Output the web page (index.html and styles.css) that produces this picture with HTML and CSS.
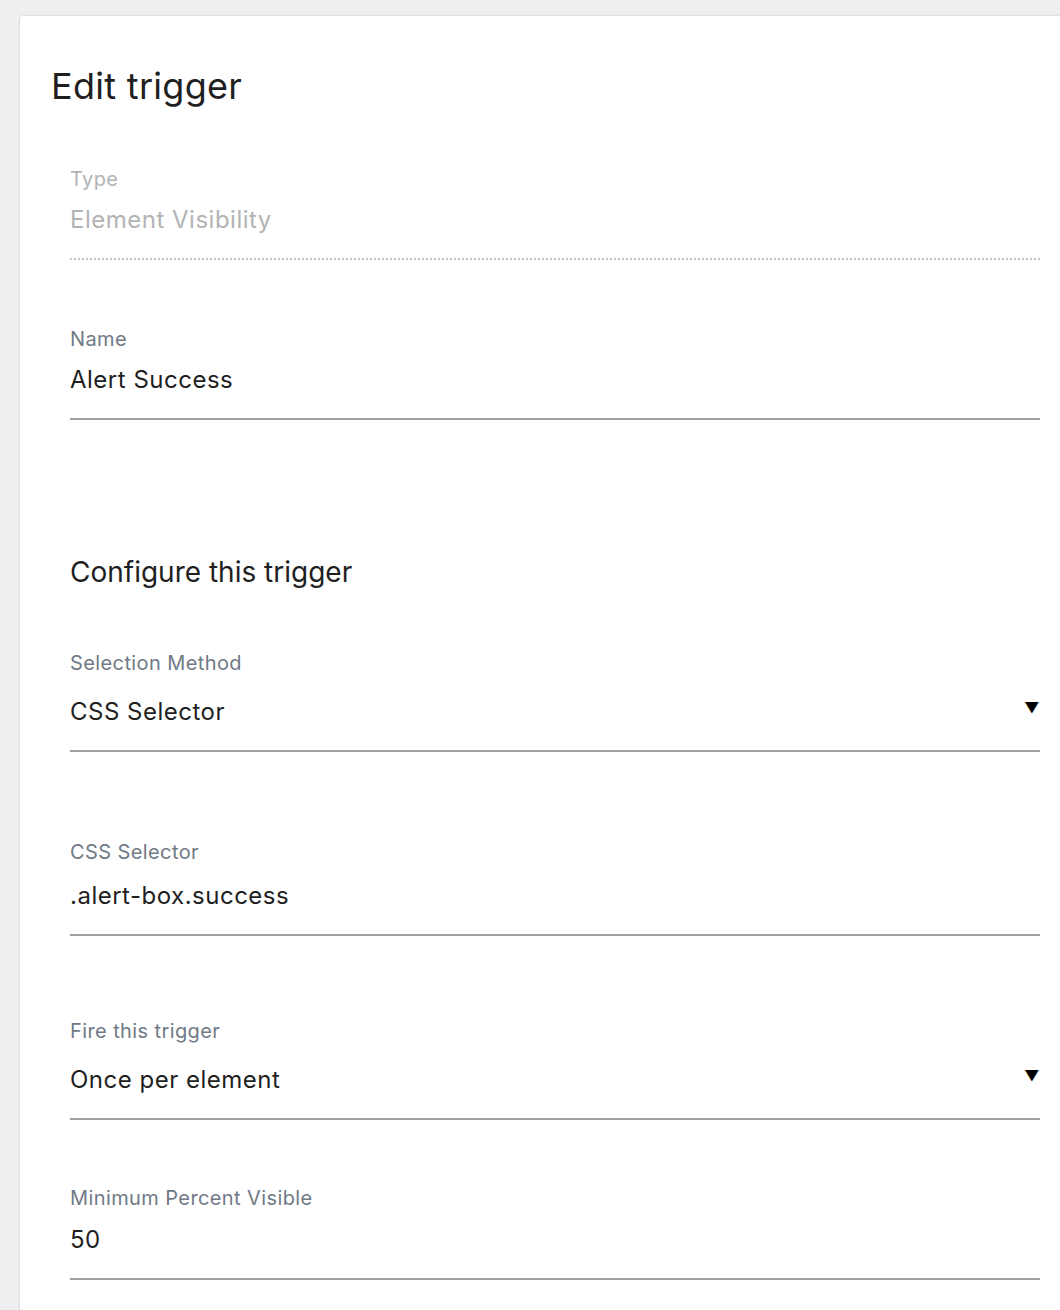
FILE: index.html
```html
<!DOCTYPE html>
<html lang="en">
<head>
<meta charset="utf-8">
<title>Edit trigger</title>
<link rel="stylesheet" href="styles.css">
</head>
<body>
<div class="page">
  <section class="card">
    <h1 class="title">Edit trigger</h1>
    <div class="fields">
      <div class="field field-disabled">
        <div class="label">Type</div>
        <div class="value">Element Visibility</div>
      </div>
      <div class="field field-name">
        <div class="label">Name</div>
        <div class="value">Alert Success</div>
      </div>
      <h2 class="section-title">Configure this trigger</h2>
      <div class="field field-select field-method">
        <div class="label">Selection Method</div>
        <div class="value"><span>CSS Selector</span><span class="arrow">&#9660;</span></div>
      </div>
      <div class="field field-css">
        <div class="label">CSS Selector</div>
        <div class="value">.alert-box.success</div>
      </div>
      <div class="field field-select field-fire">
        <div class="label">Fire this trigger</div>
        <div class="value"><span>Once per element</span><span class="arrow">&#9660;</span></div>
      </div>
      <div class="field field-min">
        <div class="label">Minimum Percent Visible</div>
        <div class="value">50</div>
      </div>
    </div>
  </section>
</div>
</body>
</html>
```
FILE: styles.css
```css
html, body {
  margin: 0;
  padding: 0;
}
body {
  background: #eeeff1;
  font-family: Inter, "Noto Sans", sans-serif;
  color: #1f1f1f;
  height: 1310px;
  overflow: hidden;
}
.page {
  padding: 16px 0 0 20px;
}
.card {
  background: #ffffff;
  border-top-left-radius: 3px;
  box-shadow: 0 0 2px rgba(0, 0, 0, 0.18), 0 1px 3px rgba(0, 0, 0, 0.06);
  min-height: 1400px;
  padding: 48px 20px 0 31px;
}
.title {
  margin: 0;
  font-size: 36px;
  font-weight: 400;
  line-height: 44px;
  color: #1f1f1f;
  letter-spacing: 0.3px;
}
.fields {
  padding-left: 19px;
}
.field {
  display: flex;
  flex-direction: column;
  border-bottom: 2px solid #a0a0a0;
}
.label {
  font-size: 20px;
  line-height: 22px;
  letter-spacing: 0.4px;
  color: #6f7a86;
}
.value {
  font-size: 24px;
  line-height: 30px;
  letter-spacing: 0.5px;
  color: #1f1f1f;
  display: flex;
  justify-content: space-between;
  align-items: center;
}
.field-disabled {
  margin-top: 60px;
  border-bottom: 2px dotted #c4c4c4;
}
.field-disabled .label,
.field-disabled .value {
  color: #b3b3b3;
}
.field-disabled .value { margin-top: 15px; padding-bottom: 23px; }
.field-name { margin-top: 68px; }
.field-name .value { margin-top: 15px; padding-bottom: 23px; }
.section-title {
  margin: 134px 0 0;
  font-size: 28px;
  font-weight: 400;
  line-height: 36px;
  color: #1f1f1f;
}
.field-method { margin-top: 62px; }
.field-method .value { margin-top: 23px; padding-bottom: 23px; }
.arrow {
  font-size: 15px;
  line-height: 20px;
  color: #000;
  margin-right: 0;
  position: relative;
  top: -4px;
}
.field-css { margin-top: 89px; }
.field-css .value { margin-top: 18px; padding-bottom: 23px; }
.field-fire { margin-top: 84px; }
.field-fire .value { margin-top: 23px; padding-bottom: 23px; }
.field-min { margin-top: 67px; }
.field-min .value { margin-top: 16px; padding-bottom: 23px; }
```
